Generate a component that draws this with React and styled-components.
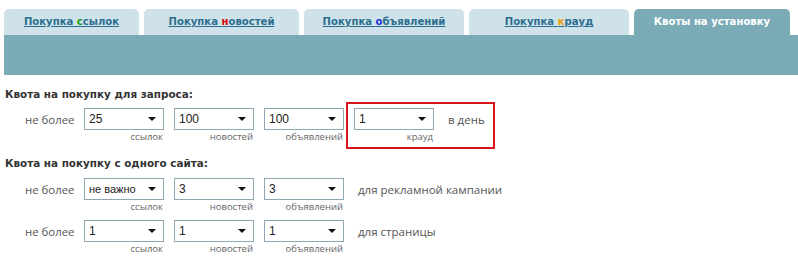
import React from "react";
import styled, { createGlobalStyle } from "styled-components";

const Global = createGlobalStyle`
  html, body { margin: 0; padding: 0; background: #fff; }
  body { font-family: "DejaVu Sans", Verdana, sans-serif; }
`;

const Page = styled.div`
  width: 798px;
  height: 268px;
  overflow: hidden;
  padding-top: 9px;
  box-sizing: border-box;
`;

const Tabs = styled.div`
  display: flex;
  gap: 5px;
  padding-left: 4px;
`;

const Tab = styled.div`
  width: ${(p) => p.$w}px;
  height: 26px;
  line-height: 26px;
  text-align: center;
  border-radius: 5px 5px 0 0;
  background: ${(p) => (p.$active ? "#7aabb6" : "#cfe2ea")};
  font-family: "DejaVu Sans", Verdana, sans-serif;
  font-weight: bold;
  font-size: 10.1px;
  color: ${(p) => (p.$active ? "#fff" : "#2b6f8e")};
  text-decoration: ${(p) => (p.$active ? "none" : "underline")};
  white-space: nowrap;
`;

const Hl = styled.span`
  color: ${(p) => p.$c};
`;

const Band = styled.div`
  margin-left: 4px;
  height: 40px;
  background: #7aabb6;
`;

const Content = styled.div`
  padding: 12px 0 0 5px;
  display: flex;
  flex-direction: column;
`;

const Heading = styled.div`
  font-family: "DejaVu Sans", Verdana, sans-serif;
  font-weight: bold;
  font-size: 10.4px;
  line-height: 15px;
  height: 15px;
  color: #333;
  margin-top: ${(p) => p.$mt || 0}px;
`;

const Row = styled.div`
  display: flex;
  align-items: center;
  padding-left: 20px;
  margin-top: ${(p) => p.$mt || 0}px;
`;

const Prefix = styled.div`
  width: 59px;
  font-family: "Open Sans", sans-serif;
  font-size: 11.4px;
  color: #555;
  margin-top: -13px;
`;

const Suffix = styled.div`
  font-family: "Open Sans", sans-serif;
  font-size: 11.5px;
  color: #555;
  margin-top: -13px;
  margin-left: ${(p) => p.$ml || 14}px;
`;

const Field = styled.div`
  display: flex;
  flex-direction: column;
  width: 80px;
  margin-right: ${(p) => (p.$last ? 0 : 10)}px;
`;

const Box = styled.div`
  position: relative;
  height: 22px;
  box-sizing: border-box;
  border: 1px solid #8fa8b2;
  background: #fff;
  padding-left: 4px;
  font-family: "Liberation Sans", Arial, sans-serif;
  font-size: ${(p) => (p.$small ? 11 : 12)}px;
  line-height: 20px;
  color: #222;
  &::after {
    content: "";
    position: absolute;
    right: 7px;
    top: 8px;
    border-left: 4px solid transparent;
    border-right: 4px solid transparent;
    border-top: 4px solid #111;
  }
`;

const Label = styled.div`
  height: 13px;
  line-height: 13px;
  text-align: right;
  padding-right: 1px;
  font-family: "Open Sans", sans-serif;
  font-size: 9.5px;
  color: #666;
`;

const Highlight = styled.div`
  display: flex;
  align-items: center;
  border: 2px solid #d8141c;
  padding: 4px 8px 4px 6px;
  margin-left: 2px;
`;

function Select({ value, label, last, small }) {
  return (
    <Field $last={last}>
      <Box $small={small}>{value}</Box>
      <Label>{label}</Label>
    </Field>
  );
}

export default function App() {
  return (
    <>
      <Global />
      <Page>
        <Tabs>
          <Tab $w={135}>
            Покупка <Hl $c="#1a9a1a">с</Hl>сылок
          </Tab>
          <Tab $w={155}>
            Покупка <Hl $c="#e00000">н</Hl>овостей
          </Tab>
          <Tab $w={160}>
            Покупка <Hl $c="#1a35d8">о</Hl>бъявлений
          </Tab>
          <Tab $w={160}>
            Покупка <Hl $c="#f0a000">к</Hl>рауд
          </Tab>
          <Tab $w={156} $active>
            Квоты на установку
          </Tab>
        </Tabs>
        <Band />
        <Content>
          <Heading>Квота на покупку для запроса:</Heading>
          <Row>
            <Prefix>не более</Prefix>
            <Select value="25" label="ссылок" />
            <Select value="100" label="новостей" />
            <Select value="100" label="объявлений" last />
            <Highlight>
              <Select value="1" label="крауд" last />
              <Suffix>в день</Suffix>
            </Highlight>
          </Row>
          <Heading $mt={7}>Квота на покупку с одного сайта:</Heading>
          <Row $mt={7}>
            <Prefix>не более</Prefix>
            <Select value="не важно" label="ссылок" small />
            <Select value="3" label="новостей" />
            <Select value="3" label="объявлений" last />
            <Suffix>для рекламной кампании</Suffix>
          </Row>
          <Row $mt={7}>
            <Prefix>не более</Prefix>
            <Select value="1" label="ссылок" />
            <Select value="1" label="новостей" />
            <Select value="1" label="объявлений" last />
            <Suffix>для страницы</Suffix>
          </Row>
        </Content>
      </Page>
    </>
  );
}
